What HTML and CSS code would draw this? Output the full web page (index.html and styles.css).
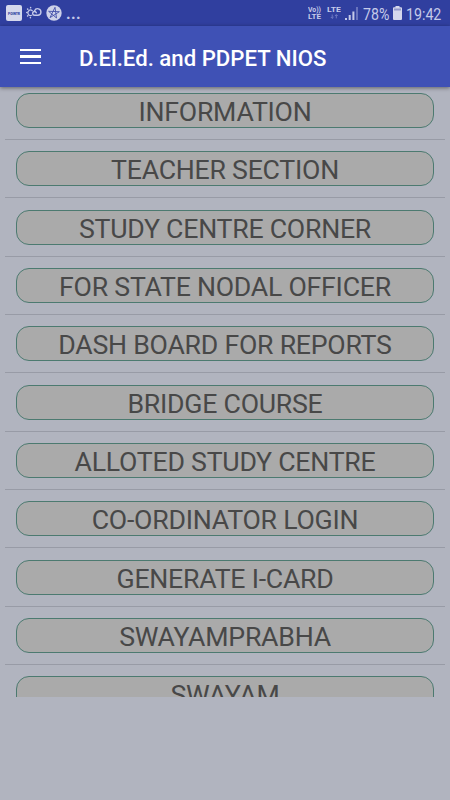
FILE: index.html
```html
<!DOCTYPE html>
<html lang="en">
<head>
    <meta charset="UTF-8">
    <title>D.El.Ed. and PDPET NIOS</title>
    <meta name="viewport" content="width=device-width,initial-scale=1">
    <link rel="stylesheet" href="styles.css">
</head>
<body>
    <div class="status-bar">
        <div class="notifications">
            <svg class="pointr-icon" width="16" height="16" viewBox="0 0 16 16">
                <rect width="16" height="16" rx="2" fill="#d5d8ec"/>
                <text x="8" y="9.7" text-anchor="middle" textLength="12" lengthAdjust="spacingAndGlyphs">POINTR</text>
            </svg>
            <svg class="weather-icon" width="16" height="14" viewBox="0 0 16 14" fill="none" stroke="#c5cae9" stroke-linecap="round">
                <path d="M5.6 9.3A2.7 2.7 0 1 1 6.3 4.7" stroke-width="1.2"/>
                <path d="M4.6 1.4v.3M1.6 3l.2.2M.7 6.5h.3M1.6 10l.2-.2M4.4 11.8v-.3" stroke-width="1.5"/>
                <path d="M10.3 6.8A1.9 1.9 0 1 0 8.6 9.3H11.8a3.3 3.3 0 1 0-3.2-4.6" stroke-width="1.4"/>
            </svg>
            <svg class="star-icon" width="16" height="16" viewBox="0 0 16 16">
                <circle cx="8" cy="8" r="7.7" fill="#cdd1e9"/>
                <path d="M9 2.3L10.5 13 2.6 6.3l10.8.4L4 12.6z" fill="none" stroke="#4450a9" stroke-width=".9"/>
            </svg>
            <span class="more">...</span>
        </div>
        <div class="system">
            <svg class="network" width="33" height="14" viewBox="0 0 33 14">
                <text x="0" y="5.7" textLength="13" lengthAdjust="spacingAndGlyphs">Vo))</text>
                <text x="0" y="13" textLength="13" lengthAdjust="spacingAndGlyphs">LTE</text>
                <text x="19" y="6" textLength="14" lengthAdjust="spacingAndGlyphs">LTE</text>
                <path d="M24.2 8.5v3.7M22.800 11l1.4 1.4 1.4-1.4M28.3 12.400V8.800M26.9 10l1.4-1.4 1.4 1.4" fill="none" stroke="#7680c6" stroke-width=".9"/>
            </svg>
            <svg class="signal" width="13" height="13" viewBox="0 0 13 13">
                <path d="M0 11h2v2H0zM3.7 8h2v5h-2zM7.4 4.5h2V13h-2z" fill="#c5cae9"/>
                <path d="M11 0h2v13h-2z" fill="#6873bd"/>
            </svg>
            <span class="percent">78%</span>
            <svg class="battery" width="9" height="14" viewBox="0 0 9 14">
                <path d="M2.5 0h4v1.3H8q1 0 1 1V13q0 1-1 1H1q-1 0-1-1V2.3q0-1 1-1h1.5z" fill="#d5d8ec"/>
                <path d="M1 2.5h7v2H1z" fill="#9299cb"/>
            </svg>
            <span class="clock">19:42</span>
        </div>
    </div>

    <header class="toolbar">
        <button class="menu-btn" aria-label="Menu">
            <span></span>
            <span></span>
            <span></span>
        </button>
        <h1>D.El.Ed. and PDPET NIOS</h1>
    </header>

    <ul class="menu-list">
        <li><a href="#">INFORMATION</a></li>
        <li><a href="#">TEACHER SECTION</a></li>
        <li><a href="#">STUDY CENTRE CORNER</a></li>
        <li><a href="#">FOR STATE NODAL OFFICER</a></li>
        <li><a href="#">DASH BOARD FOR REPORTS</a></li>
        <li><a href="#">BRIDGE COURSE</a></li>
        <li><a href="#">ALLOTED STUDY CENTRE</a></li>
        <li><a href="#">CO-ORDINATOR LOGIN</a></li>
        <li><a href="#">GENERATE I-CARD</a></li>
        <li><a href="#">SWAYAMPRABHA</a></li>
        <li><a href="#">SWAYAM</a></li>
    </ul>
</body>
</html>
```

FILE: styles.css
```css
* {
    margin: 0;
    padding: 0;
    box-sizing: border-box;
}

body {
    font-family: Roboto, 'Liberation Sans', sans-serif;
    background: #b1b4bf;
    height: 100vh;
    overflow: hidden;
}

/* Status bar */
.status-bar {
    height: 26px;
    padding: 0 9px 0 6px;
    background: #303f9f;
    color: #c5cae9;
    display: flex;
    justify-content: space-between;
    align-items: center;
}

.notifications,
.system {
    display: flex;
    align-items: center;
}

.pointr-icon text {
    font-size: 4px;
    font-weight: 900;
    fill: #303f9f;
}

.weather-icon {
    margin-left: 4px;
}

.star-icon {
    margin-left: 4px;
}

.more {
    margin-left: 4px;
    font-size: 16px;
    font-weight: 700;
    letter-spacing: 0.3px;
    line-height: 26px;
    padding-top: 2px;
}

.network {
    margin-right: 4px;
}

.network text {
    font-size: 7.2px;
    font-weight: 700;
    fill: #c5cae9;
}

.percent,
.clock {
    font-size: 16.5px;
    line-height: 26px;
    padding-top: 3px;
    transform: scaleX(0.86);
    transform-origin: left;
}

.percent {
    width: 26px;
    margin: 0 4px 0 5px;
}

.clock {
    width: 35px;
    margin-left: 4px;
}

/* Toolbar */
.toolbar {
    position: relative;
    height: 61px;
    padding-left: 20px;
    background: #3f51b5;
    box-shadow: 0 1px 4px rgba(0,0,0,0.45);
    display: flex;
    align-items: center;
}

.menu-btn {
    width: 21px;
    background: none;
    border: none;
    display: flex;
    flex-direction: column;
    gap: 4px;
}

.menu-btn span {
    height: 2.4px;
    background: #fff;
}

.toolbar h1 {
    margin-left: 38px;
    padding-top: 2px;
    color: #fff;
    font-size: 22.2px;
    font-weight: 500;
    white-space: nowrap;
}

/* Menu */
.menu-list {
    height: 610px;
    margin: 0 5px;
    overflow: hidden;
    list-style: none;
}

.menu-list li {
    height: 58.33px;
    padding: 11.4px 11px 0;
    border-top: 1px solid #989ba6;
}

.menu-list li:first-child {
    height: 52px;
    padding-top: 6px;
    border-top: none;
}

.menu-list a {
    display: block;
    height: 35px;
    padding-top: 1px;
    border: 1px solid #4c7a70;
    border-radius: 13px;
    background: #aaaaaa;
    color: #484848;
    font-size: 26.7px;
    letter-spacing: -0.25px;
    line-height: 35px;
    text-align: center;
    text-decoration: none;
    white-space: nowrap;
}
```
